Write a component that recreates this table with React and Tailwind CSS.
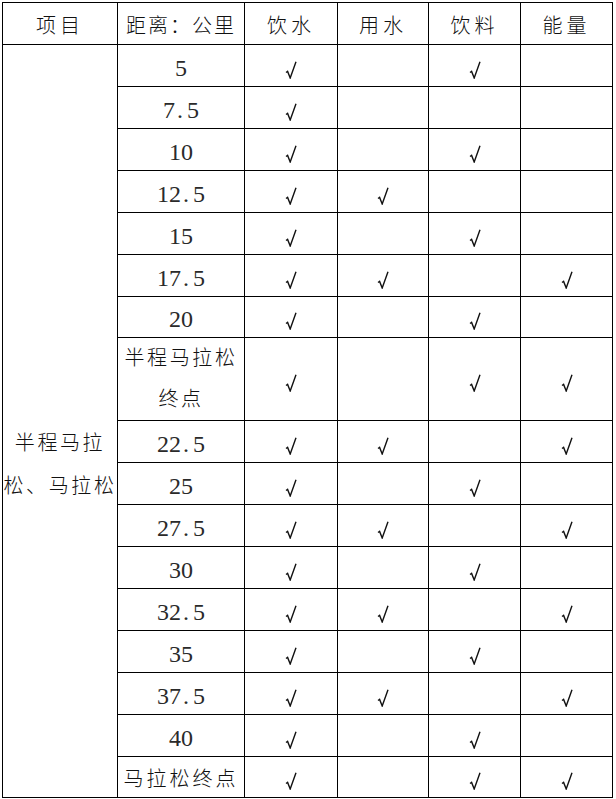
import React from 'react';

const FONT = { fontFamily: '"Liberation Serif", "Noto Sans CJK SC", serif' };

const rows = [
  { d: '5', a: 1, b: 0, c: 1, e: 0 },
  { d: '7.5', a: 1, b: 0, c: 0, e: 0 },
  { d: '10', a: 1, b: 0, c: 1, e: 0 },
  { d: '12.5', a: 1, b: 1, c: 0, e: 0 },
  { d: '15', a: 1, b: 0, c: 1, e: 0 },
  { d: '17.5', a: 1, b: 1, c: 0, e: 1 },
  { d: '20', a: 1, b: 0, c: 1, e: 0, h: 'h-[41px]' },
  { d: 'half', a: 1, b: 0, c: 1, e: 1, h: 'h-[82px]' },
  { d: '22.5', a: 1, b: 1, c: 0, e: 1 },
  { d: '25', a: 1, b: 0, c: 1, e: 0 },
  { d: '27.5', a: 1, b: 1, c: 0, e: 1 },
  { d: '30', a: 1, b: 0, c: 1, e: 0 },
  { d: '32.5', a: 1, b: 1, c: 0, e: 1 },
  { d: '35', a: 1, b: 0, c: 1, e: 0 },
  { d: '37.5', a: 1, b: 1, c: 0, e: 1 },
  { d: '40', a: 1, b: 0, c: 1, e: 0 },
  { d: 'full', a: 1, b: 0, c: 1, e: 1, h: 'h-[41px]' },
];

const cell = 'border border-black text-center align-middle p-0';

function Tick() {
  return (
    <svg width="12" height="18" viewBox="0 0 12 18" className="inline-block mt-[4px]" aria-hidden>
      <path d="M1 11.5 L2.6 10.4 L5.2 17 L11 0.8" fill="none" stroke="#111" strokeWidth="1.4" strokeLinejoin="miter" />
    </svg>
  );
}

function Check({ on }) {
  return <td className={cell}>{on ? <Tick /> : null}</td>;
}

function Num({ v }) {
  const [a, b] = v.split('.');
  return (
    <span className="inline-block pt-[5px] text-[24px] leading-[30px] text-[#2a2a2a]">
      {a}
      {b != null && (
        <>
          <span className="inline-block w-[12px] pl-[2px] text-left">.</span>
          {b}
        </>
      )}
    </span>
  );
}

function Distance({ d }) {
  if (d === 'half') {
    return (
      <td className={`${cell} leading-[41px] tracking-[2.6px]`}>
        半程马拉松
        <br />
        终点
      </td>
    );
  }
  if (d === 'full') {
    return <td className={`${cell} tracking-[3px] pt-[4px]`}>马拉松终点</td>;
  }
  return (
    <td className={cell}>
      <Num v={d} />
    </td>
  );
}

export default function App() {
  return (
    <div className="bg-white w-[616px] h-[799px] pl-[2px] pt-[2px]" style={FONT}>
      <table className="table-fixed border-collapse text-[20px] font-light text-[#111]">
        <colgroup>
          <col className="w-[115px]" />
          <col className="w-[127px]" />
          <col className="w-[93px]" />
          <col className="w-[91px]" />
          <col className="w-[92px]" />
          <col className="w-[92px]" />
        </colgroup>
        <thead>
          <tr className="h-[42px]">
            <th className={`${cell} pt-[5px] font-light tracking-[4px]`}>项目</th>
            <th className={`${cell} pt-[5px] font-light tracking-[2px]`}>距离：公里</th>
            <th className={`${cell} pt-[5px] font-light tracking-[4px]`}>饮水</th>
            <th className={`${cell} pt-[5px] font-light tracking-[4px]`}>用水</th>
            <th className={`${cell} pt-[5px] font-light tracking-[4px]`}>饮料</th>
            <th className={`${cell} pt-[5px] font-light tracking-[4px]`}>能量</th>
          </tr>
        </thead>
        <tbody>
          {rows.map((r, i) => (
            <tr key={r.d} className={r.h || 'h-[42px]'}>
              {i === 0 && (
                <td rowSpan={rows.length} className={`${cell} leading-[43px] tracking-[2.6px]`}>
                  <div className="pt-[88px]">
                    半程马拉
                    <br />
                    松、马拉松
                  </div>
                </td>
              )}
              <Distance d={r.d} />
              <Check on={r.a} />
              <Check on={r.b} />
              <Check on={r.c} />
              <Check on={r.e} />
            </tr>
          ))}
        </tbody>
      </table>
    </div>
  );
}
